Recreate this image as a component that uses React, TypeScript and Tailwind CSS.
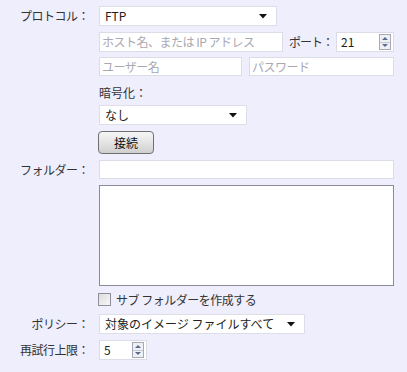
const FONT = "font-['Meiryo_UI','Noto_Sans_CJK_JP','Noto_Sans',sans-serif]";

function Arrow() {
  return (
    <svg width="8" height="5" viewBox="0 0 8 5" className="shrink-0">
      <path d="M0 0h8L4 4.5z" fill="#111" />
    </svg>
  );
}

function Select({ value, w }: { value: string; w: string }) {
  return (
    <div
      className={`flex h-[20px] ${w} items-center justify-between whitespace-nowrap border border-[#dedee8] bg-white pl-[5px] pr-[9px] text-[12px] leading-[16px] text-[#222]`}
    >
      <span>{value}</span>
      <Arrow />
    </div>
  );
}

function Input({ placeholder, w, h = "h-[19px]" }: { placeholder?: string; w: string; h?: string }) {
  return (
    <div
      className={`flex ${h} ${w} items-center overflow-hidden whitespace-nowrap border border-[#dcdce6] bg-white px-[2px] text-[12px] leading-[16px] tracking-[-0.5px] text-[#a8a8b0]`}
    >
      {placeholder}
    </div>
  );
}

function Spin({ value, w }: { value: string; w: string }) {
  return (
    <div
      className={`flex h-[20px] ${w} items-center justify-between border border-[#dcdce6] bg-white pl-[4px] pr-[2px] text-[12px] leading-[16px] text-[#222]`}
    >
      <span>{value}</span>
      <div className="flex h-[16px] w-[12px] flex-col border border-[#a8a8b8]">
        <div className="flex flex-1 items-center justify-center border-b border-[#c8c8d4] bg-[#eef0f4]">
          <svg width="6" height="3" viewBox="0 0 6 3">
            <path d="M0 3h6L3 0z" fill="#5a6a90" />
          </svg>
        </div>
        <div className="flex flex-1 items-center justify-center bg-[#eef0f4]">
          <svg width="6" height="3" viewBox="0 0 6 3">
            <path d="M0 0h6L3 3z" fill="#5a6a90" />
          </svg>
        </div>
      </div>
    </div>
  );
}

function Label({ text }: { text: string }) {
  return (
    <div className="w-[99px] shrink-0 whitespace-nowrap pr-[10px] text-right text-[12px] leading-[16px] tracking-[-0.5px] text-[#333]">
      {text}
    </div>
  );
}

export default function App() {
  return (
    <div className={`h-[372px] w-[407px] overflow-hidden bg-[#eeeefc] pt-[6px] ${FONT}`}>
      <div className="flex h-[20px] items-center">
        <Label text="プロトコル：" />
        <Select value="FTP" w="w-[178px]" />
      </div>

      <div className="mt-[6px] flex h-[20px] items-center">
        <div className="w-[99px] shrink-0" />
        <Input placeholder="ホスト名、または IP アドレス" w="w-[184px]" h="h-[20px]" />
        <span className="ml-[6px] w-[47px] whitespace-nowrap text-[12px] leading-[16px] tracking-[-1px] text-[#333]">
          ポート：
        </span>
        <Spin value="21" w="w-[58px]" />
      </div>

      <div className="mt-[5px] flex h-[19px] items-center">
        <div className="w-[99px] shrink-0" />
        <Input placeholder="ユーザー名" w="w-[143px]" />
        <div className="w-[7px]" />
        <Input placeholder="パスワード" w="w-[145px]" />
      </div>

      <div className="mt-[6px] flex h-[22px] items-center">
        <div className="w-[99px] shrink-0" />
        <span className="text-[12px] leading-[16px] text-[#333]">暗号化：</span>
      </div>

      <div className="mt-[1px] flex h-[20px] items-center">
        <div className="w-[99px] shrink-0" />
        <Select value="なし" w="w-[148px]" />
      </div>

      <div className="mt-[6px] flex h-[23px] items-center">
        <div className="w-[98px] shrink-0" />
        <button className="h-[23px] w-[56px] rounded-[4px] border border-[#707070] bg-gradient-to-b from-[#f6f6f6] via-[#e4e4e4] to-[#cfcfcf] text-[12px] leading-[16px] text-[#111]">
          接続
        </button>
      </div>

      <div className="mt-[6px] flex h-[19px] items-center">
        <Label text="フォルダー：" />
        <Input w="w-[295px]" />
      </div>

      <div className="mt-[6px] flex h-[101px]">
        <div className="w-[99px] shrink-0" />
        <div className="h-[101px] w-[295px] border border-[#8a8a98] bg-white" />
      </div>

      <div className="mt-[6px] flex h-[15px] items-center">
        <div className="w-[98px] shrink-0" />
        <div className="h-[13px] w-[13px] border border-[#8f8f9c] bg-gradient-to-br from-[#dcdcdc] to-[#f8f8f8]" />
        <span className="ml-[5px] whitespace-nowrap text-[12px] leading-[16px] tracking-[-0.5px] text-[#333]">
          サブ フォルダーを作成する
        </span>
      </div>

      <div className="mt-[7px] flex h-[20px] items-center">
        <Label text="ポリシー：" />
        <Select value="対象のイメージ ファイルすべて" w="w-[206px]" />
      </div>

      <div className="mt-[6px] flex h-[20px] items-center">
        <Label text="再試行上限：" />
        <Spin value="5" w="w-[48px]" />
      </div>
    </div>
  );
}
